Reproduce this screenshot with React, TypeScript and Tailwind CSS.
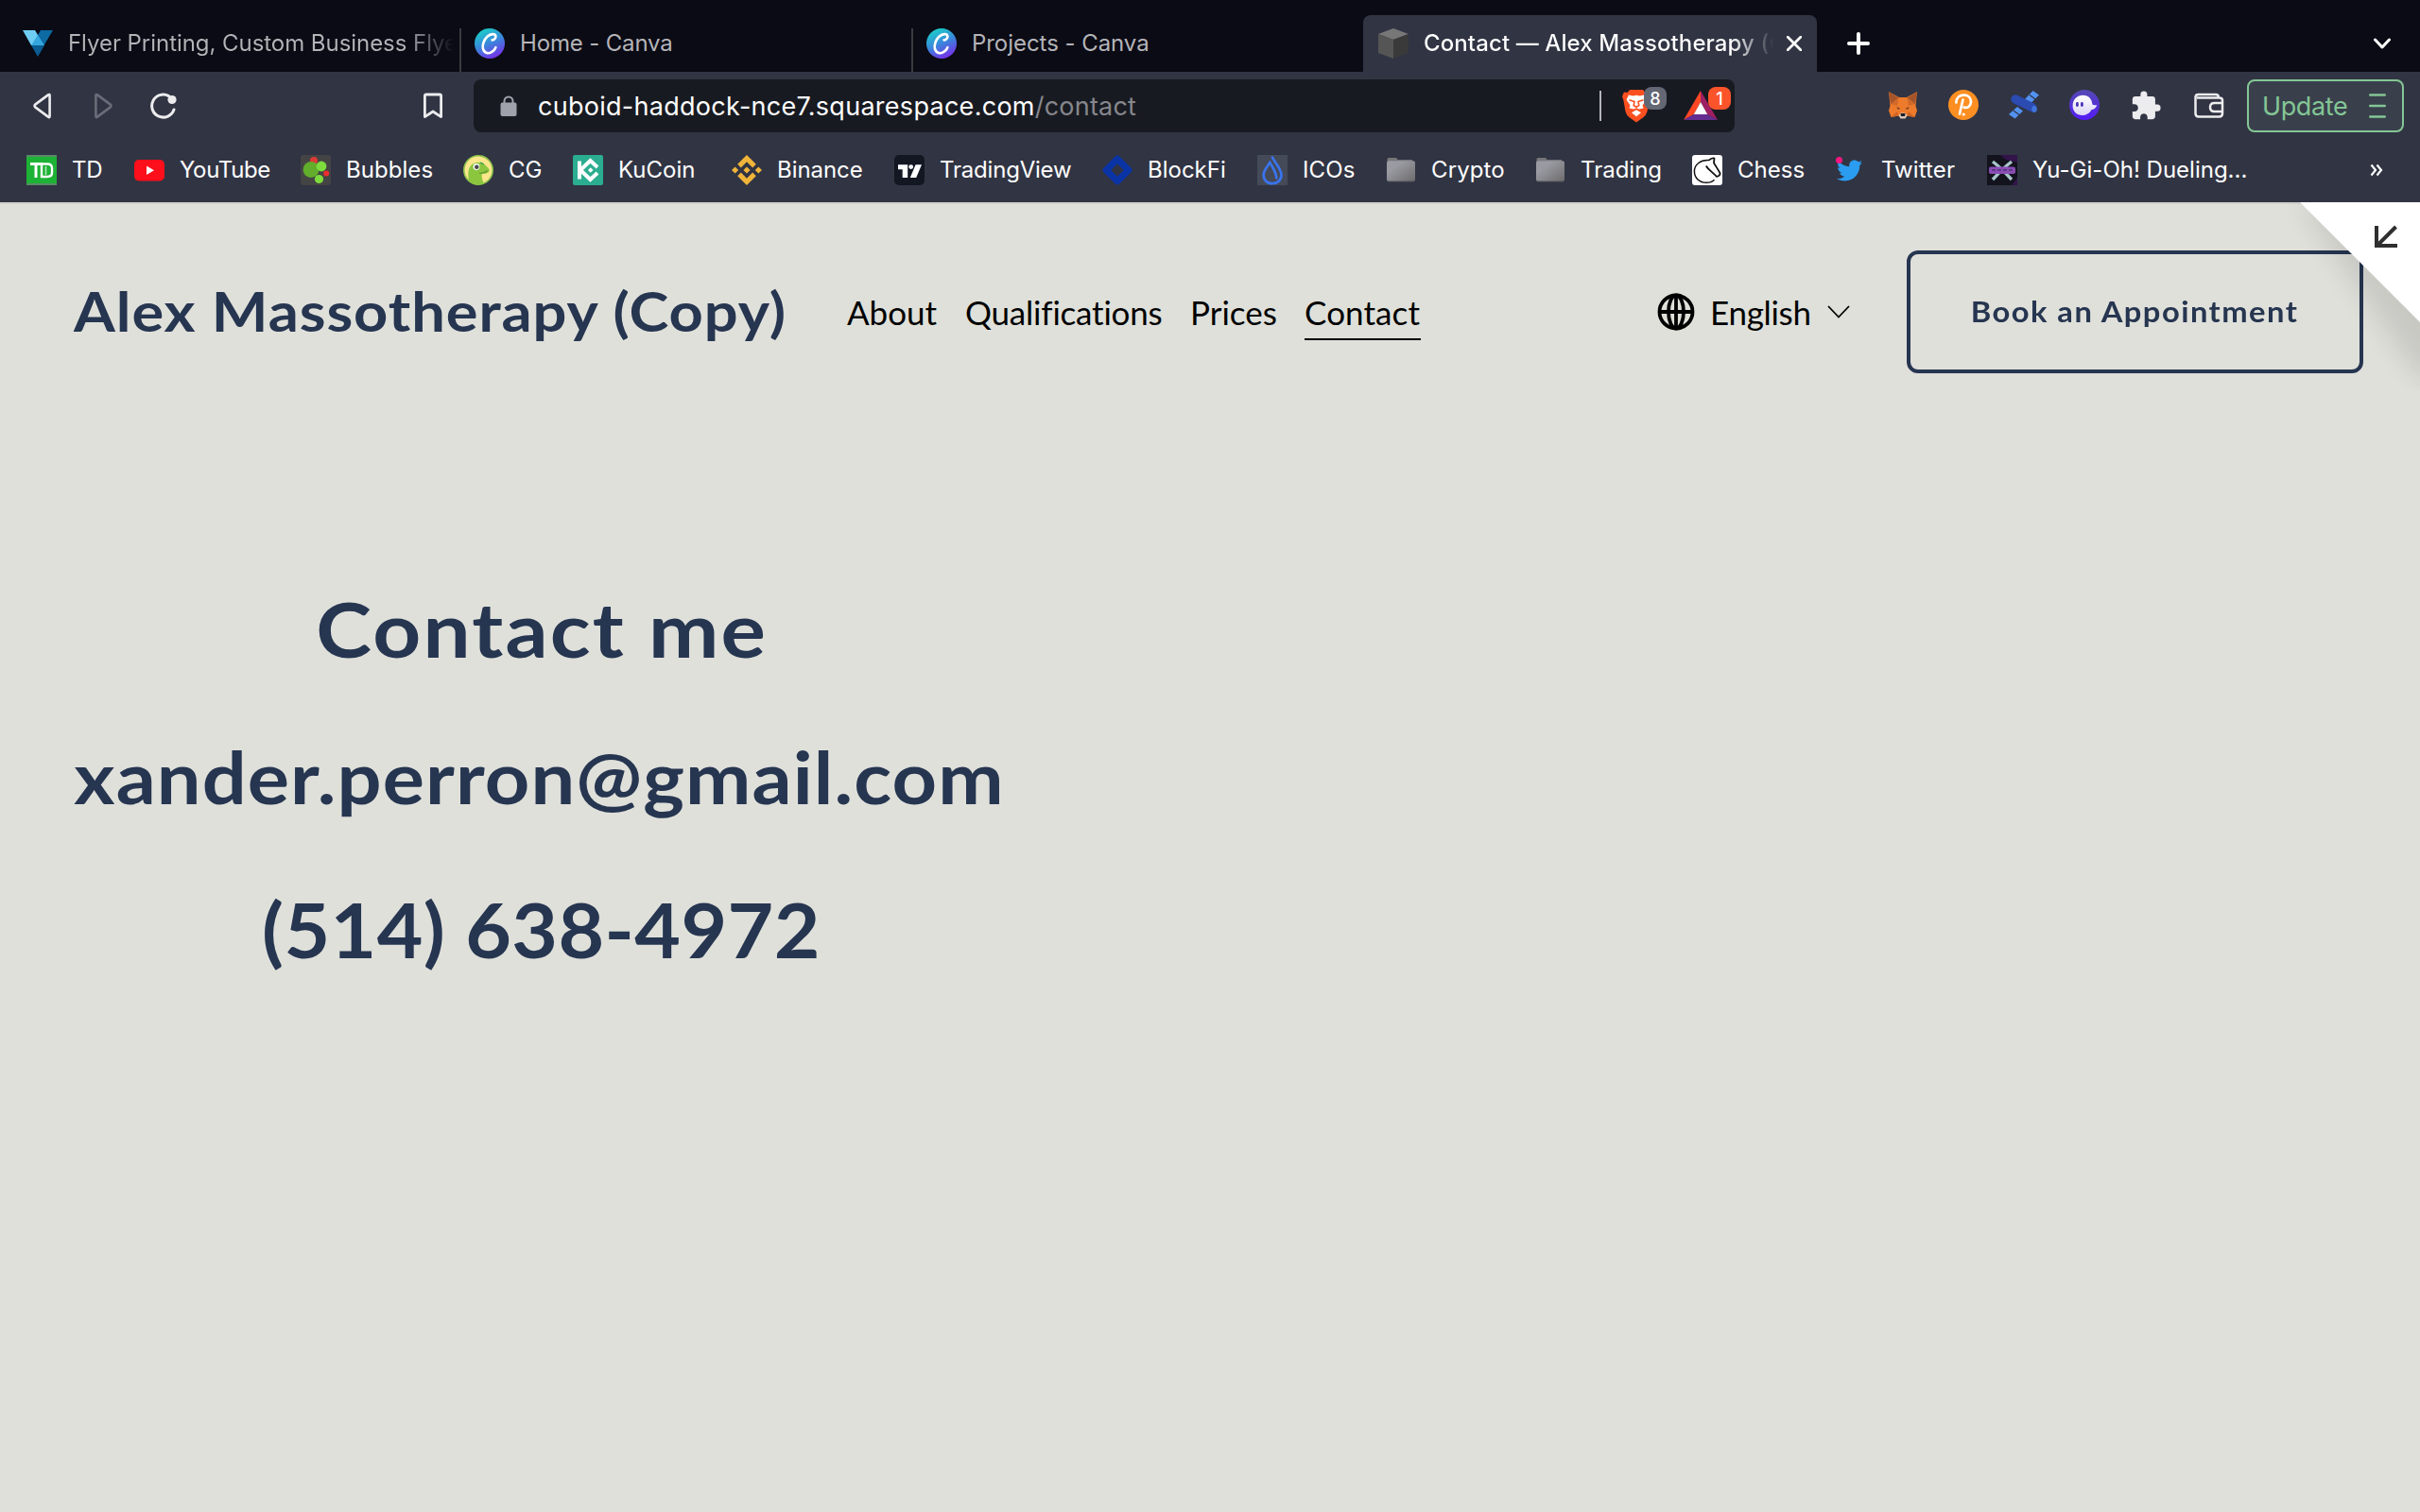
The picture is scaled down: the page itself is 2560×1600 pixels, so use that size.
import React from "react";
import { SiBinance } from "react-icons/si";
import { FaTwitter } from "react-icons/fa";
import { MdExtension } from "react-icons/md";

const Svg = ({ children, box = 32 }: { children: React.ReactNode; box?: number }) => (
  <svg viewBox={`0 0 ${box} ${box}`} className="block size-8 shrink-0" fill="none">{children}</svg>
);

/* ---------- tab icons ---------- */

const VistaIcon = () => (
  <Svg>
    <path d="M0 0H13L16 5V16H9Z" fill="#6fcdf4" />
    <path d="M16 5L19 0H32L22.5 16H16Z" fill="#0d6aa3" />
    <path d="M16 5L23 16H9Z" fill="#35a7de" />
    <path d="M9 16H23L16 28Z" fill="#0a5c91" />
  </Svg>
);

const CanvaIcon = ({ id }: { id: string }) => (
  <Svg>
    <defs>
      <linearGradient id={id} x1="0.25" y1="0" x2="0.7" y2="1">
        <stop offset="0.1" stopColor="#1fc4cc" />
        <stop offset="0.5" stopColor="#3a86dc" />
        <stop offset="1" stopColor="#7a2bea" />
      </linearGradient>
    </defs>
    <circle cx="16" cy="16" r="16" fill={`url(#${id})`} />
    <path d="M18.6 12.4C20.4 12.8 22.8 10.3 22.4 8.2C21.7 5.4 17.2 5.3 13.4 8.8C9.8 12.2 8 17.6 8.9 21.4C9.9 25.9 14 27.2 17.6 25.4C19.9 24.3 21.8 22 22.4 20.2" stroke="#fff" strokeWidth="2.6" strokeLinecap="round" />
  </Svg>
);

const CubeIcon = () => (
  <Svg>
    <path d="M16 0L32 6L16 12L0 6Z" fill="#777" />
    <path d="M0 6L16 12V32L0 26Z" fill="#555" />
    <path d="M32 6L16 12V32L32 26Z" fill="#3a3a3a" />
  </Svg>
);

/* ---------- bookmark icons ---------- */

const TdIcon = () => (
  <Svg>
    <rect width="32" height="32" fill="#1db235" />
    <rect width="32" height="2" fill="#5a8a6a" />
    <rect y="30" width="32" height="2" fill="#5a8a6a" />
    <path d="M4 9.5H17M10 9.5V24" stroke="#fff" strokeWidth="3" />
    <path d="M13 9.5H22Q27 9.5 27 14V19Q27 23 22 23H16V11" stroke="#fff" strokeWidth="2.4" />
    <path d="M20.5 12V21" stroke="#b6e8bd" strokeWidth="1.5" />
  </Svg>
);

const YouTubeIcon = () => (
  <Svg>
    <rect y="5" width="32" height="22.5" rx="5" fill="#fd0f1b" />
    <path d="M13 11.5L21 16.2L13 21Z" fill="#fff" />
  </Svg>
);

const BubblesIcon = () => (
  <Svg>
    <rect width="32" height="32" rx="3" fill="#444444" />
    <circle cx="14" cy="6" r="4" fill="#dd3a35" />
    <circle cx="11" cy="15.5" r="8.4" fill="#62ad2c" />
    <circle cx="22" cy="12" r="5.4" fill="#7ddb3c" />
    <circle cx="19.5" cy="25.5" r="4.6" fill="#7ddb3c" />
    <circle cx="27.2" cy="19.6" r="3" fill="#ee2f2f" />
  </Svg>
);

const GeckoIcon = () => (
  <Svg>
    <circle cx="16" cy="16" r="15.2" fill="#fbe68c" stroke="#8bc34a" strokeWidth="1.6" />
    <path d="M6 27C4 18 6 9 14 8C20 7 24 11 27 14.5C29 18 26 20 20 20C19 24 21 28 22 30C16 33 9 31 6 27Z" fill="#8cc63f" />
    <circle cx="14" cy="12.5" r="3.4" fill="#fff" />
    <circle cx="14.3" cy="12.7" r="2.3" fill="#4a4a4a" />
    <path d="M17 19Q22 20 25.5 16.5" stroke="#5b9130" strokeWidth="1.1" />
    <path d="M18 8Q21 9 22 10" stroke="#0a8a50" strokeWidth="1" />
  </Svg>
);

const KuCoinIcon = () => (
  <Svg>
    <rect width="32" height="32" rx="2" fill="#2bad90" />
    <path d="M7 6.5V25.5M8 16L18.5 6L26 13M8 16L18.5 26L26 19" stroke="#fff" strokeWidth="4" />
    <path d="M18.7 13.2L21.5 16L18.7 18.8L15.9 16Z" fill="#fff" />
  </Svg>
);

const BinanceIcon = () => <SiBinance className="block size-8 shrink-0 text-[#efb439]" />;

const TradingViewIcon = () => (
  <Svg>
    <rect width="32" height="32" rx="5" fill="#131722" />
    <path d="M4 10.2H14.2V24H8.7V15.2H4Z" fill="#fff" />
    <circle cx="17.7" cy="12.6" r="2.4" fill="#fff" />
    <path d="M22.6 10.2H29L23.2 24H16.8Z" fill="#fff" />
  </Svg>
);

const BlockFiIcon = () => (
  <Svg>
    <path d="M16 4.2L27.800 16L16 27.800L4.200 16Z" stroke="#0a33a6" strokeWidth="7.200" strokeLinejoin="round" />
  </Svg>
);

const DropIcon = () => (
  <Svg>
    <rect width="32" height="32" fill="#454a58" />
    <path d="M15.6 1.5C17 6.5 25.5 14 25.5 21C25.5 26.5 21.5 30.2 16 30.2C10.5 30.2 6.6 26.5 6.6 21C6.6 16.5 10.5 12.5 13.4 8C16 13 20.4 18 20.4 25.5" stroke="#3a74ee" strokeWidth="2.7" />
  </Svg>
);

const FolderIcon = ({ id }: { id: string }) => (
  <Svg>
    <defs>
      <linearGradient id={id} x1="0" y1="0" x2="1" y2="1">
        <stop offset="0.3" stopColor="#999aa2" />
        <stop offset="1" stopColor="#6d6b6c" />
      </linearGradient>
    </defs>
    <path d="M1.5 8V4.6Q1.5 3 3 3H10.5Q12 3 12.5 5H28V12H1.5Z" fill="#77777a" />
    <rect x="1" y="6.2" width="30" height="21.8" rx="2" fill={`url(#${id})`} />
    <path d="M2 28H30" stroke="#55565c" strokeWidth="1" />
  </Svg>
);

const ChessIcon = () => (
  <Svg>
    <rect width="32" height="32" rx="3" fill="#fff" />
    <path d="M23.5 3C21 3.4 19 4.2 17.6 5.6C9 5 2.4 10 2.4 17.2C2.4 24.5 8 29.3 15 29.3C18.5 29.3 21.5 28.2 23.5 26.2" stroke="#111" strokeWidth="1.5" />
    <path d="M23.5 3L23 8.4C25 12 27.8 15.8 29.6 19.3C29.8 21 28 22.8 26 22.8C22.5 19 17 15.5 14.8 11.5" stroke="#111" strokeWidth="1.8" />
  </Svg>
);

const TwitterIcon = () => (
  <span className="relative block size-8 shrink-0">
    <FaTwitter className="absolute top-[3px] left-[1px] size-[27px] text-[#2a9df0]" />
    <span className="absolute top-[2px] left-0 size-[7px] rounded-full bg-[#f91880]" />
  </span>
);

const DuelIcon = () => (
  <Svg>
    <rect width="32" height="32" fill="#13131e" />
    <path d="M14 0H32V8L20 5ZM26 32H32V24Z" fill="#32144a" />
    <path d="M6 7Q14 13 26 26M26 7Q18 13 6 26" stroke="#a9c6cc" strokeWidth="3.4" />
    <rect x="2" y="12.5" width="28" height="7.5" rx="2" fill="#8a4db5" />
    <path d="M5 16H28" stroke="#5d3a86" strokeWidth="2" strokeDasharray="4 2" />
  </Svg>
);

/* ---------- extension icons ---------- */

const FoxIcon = () => (
  <Svg>
    <path d="M1 2L12 8H20L31 2L29.5 17L31 22L28.5 29L20.5 27.5L18.5 30H13.5L11.5 27.5L3.5 29L1 22L2.5 17Z" fill="#ee7b2b" />
    <path d="M1 2L11.5 8.500L3 15ZM31 2L20.500 8.500L29 15Z" fill="#a5542a" />
    <path d="M3 15L11.500 8.500L10 17ZM29 15L20.500 8.500L22 17Z" fill="#d06a2a" />
    <path d="M9.500 18L13.5 20L10.500 20.800ZM22.500 18L18.5 20L21.500 20.800Z" fill="#6a3a2a" />
    <path d="M3.5 29L10 23L11.500 27.500ZM28.5 29L22 23L20.500 27.500Z" fill="#cf6524" />
    <path d="M11.5 27L14 24.5H18L20.5 27L18.5 30.5H13.5Z" fill="#d8c6b8" />
    <path d="M13.5 25H18.5L18 28H14Z" fill="#1b1b22" />
  </Svg>
);

const PinIcon = () => (
  <Svg>
    <circle cx="16" cy="16" r="16" fill="#fd8f22" />
    <path d="M8.4 13.5C8.4 8.5 12 5.7 16.5 5.7C21 5.7 24 8.6 24 12.6C24 17 20.6 19.8 16.6 18.6M15.5 10.5L12 25.5" stroke="#fff" strokeWidth="2.7" strokeLinecap="round" />
    <circle cx="16.2" cy="26" r="1.6" fill="#fff" />
  </Svg>
);

const SatelliteIcon = () => (
  <Svg>
    <path d="M25.5 1L32 5.5L23 14.5L17 10ZM9 18L15 22.5L6.5 30.5L0 26Z" fill="#5292f0" />
    <path d="M22 5.5L28 10M5 22L11 26.5" stroke="#313443" strokeWidth="1.2" />
    <path d="M7 10L24.500 18.500" stroke="#2b4bb0" strokeWidth="9.5" strokeLinecap="round" />
    <ellipse cx="27" cy="20.5" rx="2.8" ry="3.4" fill="#3f74dd" />
  </Svg>
);

const GhostIcon = () => (
  <Svg>
    <defs>
      <linearGradient id="ghost" x1="0" y1="0" x2="0" y2="1">
        <stop offset="0" stopColor="#534bb1" />
        <stop offset="1" stopColor="#551bf9" />
      </linearGradient>
      <linearGradient id="ghostBody" x1="0" y1="0" x2="0" y2="1">
        <stop offset="0" stopColor="#fff" />
        <stop offset="1" stopColor="#dcd6f5" />
      </linearGradient>
    </defs>
    <circle cx="16" cy="16" r="16" fill="url(#ghost)" />
    <path d="M3.6 17C3.6 10 8.5 5.8 14.5 5.8C20.5 5.8 24 10 24.4 15.5C25.5 16.5 27.5 16.3 29 16C28.5 19.5 26 21 23.5 21C21.5 25 17.5 27 13.5 27C8 27 3.6 23 3.6 17Z" fill="url(#ghostBody)" />
    <rect x="7" y="13" width="2.8" height="5" rx="1.4" fill="#4a34b8" />
    <rect x="12" y="13" width="2.8" height="5" rx="1.4" fill="#4a34b8" />
  </Svg>
);

const PuzzleIcon = () => <MdExtension className="block size-[34px] shrink-0 text-[#ececee]" />;

const WalletIcon = () => (
  <Svg>
    <path d="M1.5 7V25Q1.5 28.5 5 28.5H26.5Q30 28.5 30 25V11.5Q30 8.5 27 8.5H3M1.5 8Q1.5 5 4.5 5H23Q26 5 26 8.5" stroke="#ececee" strokeWidth="2.5" />
    <path d="M30 14H21.5Q17 14 17 18.5Q17 23 21.5 23H30" stroke="#ececee" strokeWidth="2.5" />
  </Svg>
);

/* ---------- data ---------- */

const bookmarks = [
  { label: "TD", icon: <TdIcon />, cell: "w-[114px]", text: "tracking-[-0.3px]" },
  { label: "YouTube", icon: <YouTubeIcon />, cell: "w-[176px]", text: "tracking-[-0.35px]" },
  { label: "Bubbles", icon: <BubblesIcon />, cell: "w-[172px]", text: "tracking-[0.05px]" },
  { label: "CG", icon: <GeckoIcon />, cell: "w-[116px]", text: "tracking-[0px]" },
  { label: "KuCoin", icon: <KuCoinIcon />, cell: "w-[168px]", text: "tracking-[0px]" },
  { label: "Binance", icon: <BinanceIcon />, cell: "w-[172px]", text: "tracking-[-0.05px]" },
  { label: "TradingView", icon: <TradingViewIcon />, cell: "w-[220px]", text: "tracking-[-0.2px]" },
  { label: "BlockFi", icon: <BlockFiIcon />, cell: "w-[164px]", text: "tracking-[0px]" },
  { label: "ICOs", icon: <DropIcon />, cell: "w-[136px]", text: "tracking-[0.1px]" },
  { label: "Crypto", icon: <FolderIcon id="folderA" />, cell: "w-[158px]", text: "tracking-[0.1px]" },
  { label: "Trading", icon: <FolderIcon id="folderB" />, cell: "w-[166px]", text: "tracking-[0px]" },
  { label: "Chess", icon: <ChessIcon />, cell: "w-[152px]", text: "tracking-[0px]" },
  { label: "Twitter", icon: <TwitterIcon />, cell: "w-[160px]", text: "tracking-[0.1px]" },
  { label: "Yu-Gi-Oh! Dueling...", icon: <DuelIcon />, cell: "w-[290px]", text: "tracking-[0px]" },
];

/* ---------- browser chrome ---------- */

const TabBar = () => (
  <div className="flex h-[76px] bg-[#0b0b15] pt-4 text-[24px] text-[#b4b4b8]">
    <div className="flex w-[486px] items-center pl-6">
      <div className="mt-1"><VistaIcon /></div>
      <span className="ml-4 w-[408px] overflow-hidden whitespace-nowrap bg-linear-to-r from-[#b4b4b8] from-87% to-transparent to-100% bg-clip-text tracking-[-0.05px] text-transparent">
        Flyer Printing, Custom Business Flyers
      </span>
    </div>
    <div className="mt-[14px] w-[2px] bg-[#3b3b40]" />
    <div className="flex w-[476px] items-center pl-[14px]">
      <CanvaIcon id="canvaA" />
      <span className="ml-4 tracking-[-0.15px]">Home - Canva</span>
    </div>
    <div className="mt-[14px] w-[2px] bg-[#3b3b40]" />
    <div className="flex w-[476px] items-center pl-[14px]">
      <CanvaIcon id="canvaB" />
      <span className="ml-4 tracking-[-0.05px]">Projects - Canva</span>
    </div>
    <div className="flex w-[480px] items-center rounded-t-lg bg-[#313443] pl-4 font-medium">
      <CubeIcon />
      <span className="ml-4 w-[370px] overflow-hidden whitespace-nowrap bg-linear-to-r from-white from-88% to-transparent to-100% bg-clip-text tracking-[0.1px] text-transparent">
        Contact — Alex Massotherapy (Copy)
      </span>
      <svg viewBox="0 0 16 16" className="ml-[14px] size-4" stroke="#fff" strokeWidth="2.8" strokeLinecap="round"><path d="M1 1L15 15M15 1L1 15" /></svg>
    </div>
    <div className="flex flex-1 items-center justify-between pr-[31px] pl-8">
      <svg viewBox="0 0 24 24" className="size-6" stroke="#fff" strokeWidth="4" strokeLinecap="round"><path d="M12 2V22M2 12H22" /></svg>
      <svg viewBox="0 0 18 12" className="h-3 w-[18px]" fill="none" stroke="#fff" strokeWidth="3" strokeLinecap="round" strokeLinejoin="round"><path d="M1.5 2L9 10L16.5 2" /></svg>
    </div>
  </div>
);

const Toolbar = () => (
  <div className="flex h-[72px] items-center bg-[#313443] text-[27px]">
    <svg viewBox="0 0 20 28" className="ml-[35px] h-7 w-5" fill="none" stroke="#ececee" strokeWidth="2.6" strokeLinejoin="round"><path d="M17.6 3.2V24.8Q17.6 27 16 25.6L2.2 15.4Q1 14 2.2 12.6L16 2.4Q17.6 1.2 17.6 3.2Z" /></svg>
    <svg viewBox="0 0 20 28" className="ml-11 h-7 w-5" fill="none" stroke="#6a6c78" strokeWidth="2.6" strokeLinejoin="round"><path d="M2.4 3.2V24.8Q2.4 27 4 25.6L17.8 15.4Q19 14 17.8 12.6L4 2.4Q2.4 1.2 2.4 3.2Z" /></svg>
    <svg viewBox="0 0 28 28" className="ml-10 size-7" fill="none" stroke="#ececee" strokeWidth="3" strokeLinecap="round"><path d="M19.5 3.6A12 12 0 1 0 25 18" /><circle cx="23" cy="7.5" r="4.6" fill="#ececee" stroke="none" /></svg>
    <svg viewBox="0 0 22 28" className="ml-[260px] h-7 w-[22px]" fill="none" stroke="#ececee" strokeWidth="2.8" strokeLinejoin="round"><path d="M2.4 25.6V3.6Q2.4 2 4 2H18Q19.6 2 19.6 3.6V25.6L11 20Z" /></svg>
    <div className="ml-[32px] flex h-14 w-[1334px] items-center rounded-lg bg-[#181a21] pl-7">
      <svg viewBox="0 0 18 22" className="h-[22px] w-[18px]"><path d="M4.5 9V6a4.5 4.5 0 0 1 9 0V9" fill="none" stroke="#9fa2ab" strokeWidth="2" /><rect x="0.5" y="7.5" width="17" height="14.5" rx="2" fill="#9fa2ab" /></svg>
      <span className="mt-[2px] ml-[22px] tracking-[0.28px] text-white">cuboid-haddock-nce7.squarespace.com</span>
      <span className="mt-[2px] tracking-[0.2px] text-[#86878c]">/contact</span>
      <div className="flex-1" />
      <div className="h-8 w-[2px] bg-[#b5b6bb]" />
      <div className="relative ml-[21px] h-9 w-[32px]">
        <svg viewBox="0 0 32 36" className="h-9 w-8">
          <path d="M9 1H23L25.5 4L29 3.5L31 8L29.6 12L27.5 24Q26.5 28 23 30.5L16 35.5L9 30.5Q5.5 28 4.5 24L2.4 12L1 8L3 3.5L6.5 4Z" fill="#fb4f20" />
          <path d="M8 6.500L12.500 7.500L16 6.800L19.500 7.500L24 6.500L26.500 11.500L22.500 17.500L23.500 20.500L19 21.500L16 20.200L13 21.500L8.500 20.500L9.500 17.500L5.500 11.500Z" fill="#fff" />
          <path d="M16 22.300L21 25.300L16 29.200L11 25.300Z" fill="#fff" />
          <path d="M8.500 11.800L14 13.500L13.200 17.500L16 19.200L18.800 17.500L18 13.500L23.500 11.800" fill="none" stroke="#fb4f20" strokeWidth="1.6" />
        </svg>
        <span className="absolute top-[-2px] left-6 flex size-6 items-center justify-center rounded-lg bg-[#646774] text-[18px] font-medium text-white">8</span>
      </div>
      <div className="relative ml-[34px] h-8 w-9">
        <svg viewBox="0 0 36 32" className="h-8 w-9">
          <path d="M18 0L0 31L11 25L18 12Z" fill="#ff4724" />
          <path d="M18 0L36 31L25 25L18 12Z" fill="#9e1f63" />
          <path d="M0 31H36L25 25H11Z" fill="#662d91" />
          <path d="M18 12L25.2 25H10.8Z" fill="#fff" />
        </svg>
        <span className="absolute top-[-4px] left-[26px] flex size-6 items-center justify-center rounded-lg bg-[#fb542b] text-[18px] font-medium text-white">1</span>
      </div>
      <div className="w-[18px]" />
    </div>
    <div className="ml-[162px] flex gap-8">
      <FoxIcon />
      <PinIcon />
      <SatelliteIcon />
      <GhostIcon />
      <div className="-mr-[2px]"><PuzzleIcon /></div>
      <div className="ml-1"><WalletIcon /></div>
    </div>
    <div className="ml-[24px] flex h-14 w-[166px] items-center rounded-lg border-2 border-[#84c695] bg-[#39404c] pl-[14px] text-[#84c695]">
      <span className="mt-[2px] w-[91px] tracking-[-0.4px]">Update</span>
      <svg viewBox="0 0 18 28" className="ml-[22px] h-7 w-[18px]" stroke="#84c695" strokeWidth="2.6" strokeLinecap="round"><path d="M1.3 2.5H16.7M1.3 14H16.7M1.3 25.5H16.7" /></svg>
    </div>
  </div>
);

const BookmarkBar = () => (
  <div className="flex h-[66px] items-center bg-[#313443] pb-[2px] pl-7 text-[24px] text-white">
    {bookmarks.map((b) => (
      <div key={b.label} className={`flex shrink-0 items-center gap-4 whitespace-nowrap ${b.cell}`}>
        {b.icon}
        <span className={b.text}>{b.label}</span>
      </div>
    ))}
    <svg viewBox="0 0 14 14" className="ml-[115px] size-[14px]" fill="none" stroke="#fff" strokeWidth="2.2"><path d="M1.5 1.5L6 7L1.5 12.5M7.5 1.5L12 7L7.5 12.5" /></svg>
  </div>
);

/* ---------- page ---------- */

const SiteHeader = () => (
  <header className="flex h-[130px] items-center pl-[78px] font-['Lato',sans-serif] text-[35px] whitespace-nowrap text-black">
    <div className="w-[818px] pb-[2px] text-[58px] leading-none font-bold text-[#263550]">
      <span className="inline-block origin-left scale-x-[1.09] tracking-[0.85px]">Alex Massotherapy (Copy)</span>
    </div>
    <nav className="flex w-[857px] gap-[31px] leading-[60px]">
      <span className="w-[94px]">About</span>
      <span className="w-[207px] tracking-[-0.2px]">Qualifications</span>
      <span className="w-[90px]">Prices</span>
      <span className="h-[60px] w-[123px] border-b-2 border-black tracking-[0.1px]">Contact</span>
    </nav>
    <div className="flex w-[264px] items-center">
      <svg viewBox="0 0 40 40" className="size-10" fill="none" stroke="#000" strokeWidth="3.8">
        <circle cx="20" cy="20" r="17.5" />
        <ellipse cx="20" cy="20" rx="8" ry="17.5" />
        <path d="M20 2V38M2 20H38" />
      </svg>
      <span className="ml-[16px] w-[108px] leading-[60px] tracking-[-0.3px]">English</span>
      <svg viewBox="0 0 24 14" className="ml-[16px] h-[14px] w-6" fill="none" stroke="#000" strokeWidth="1.8"><path d="M1 1L12 12.5L23 1" /></svg>
    </div>
    <div className="flex h-[130px] w-[483px] items-center justify-center rounded-xl border-4 border-[#263550] pb-[2px] text-[30px] font-bold text-[#263550]">
      <span className="inline-block scale-x-[1.09] tracking-[1.35px]">Book an Appointment</span>
    </div>
  </header>
);

export default function App() {
  return (
    <div className="h-[1600px] w-[2560px] overflow-hidden bg-[#dfe0da] font-['Inter',sans-serif]">
      <TabBar />
      <Toolbar />
      <BookmarkBar />
      <main className="relative h-[1386px] overflow-hidden pt-[51px] shadow-[inset_0_2px_0_#d0d1cb]">
        <SiteHeader />
        <section className="mt-[192px] ml-[78px] w-[986px] text-center font-['Lato',sans-serif] text-[80px] font-bold whitespace-nowrap text-[#263550]">
          <h1 className="h-[156px] pl-[4px] leading-[156px]"><span className="inline-block scale-x-[1.11] tracking-[2px]">Contact me</span></h1>
          <p className="h-[158px] text-[76px] leading-[158px]"><span className="inline-block scale-x-[1.09] tracking-[1px]">xander.perron@gmail.com</span></p>
          <p className="h-[164px] pl-[2px] leading-[164px]"><span className="inline-block scale-x-[1.05] tracking-[0.4px]">(514) 638-4972</span></p>
        </section>
        <svg viewBox="0 0 200 200" className="absolute top-0 right-0 size-[200px]">
          <defs>
            <filter id="cornerShadow" x="-50%" y="-50%" width="200%" height="200%"><feGaussianBlur stdDeviation="14" /></filter>
          </defs>
          <path d="M73 0H260V187H200Z" fill="#000" opacity="0.1" filter="url(#cornerShadow)" />
          <path d="M73 0H200V127Z" fill="#fff" />
          <path d="M174.5 26L156 44.5M154 25V46H176" fill="none" stroke="#2f2f2f" strokeWidth="4" />
        </svg>
      </main>
    </div>
  );
}
